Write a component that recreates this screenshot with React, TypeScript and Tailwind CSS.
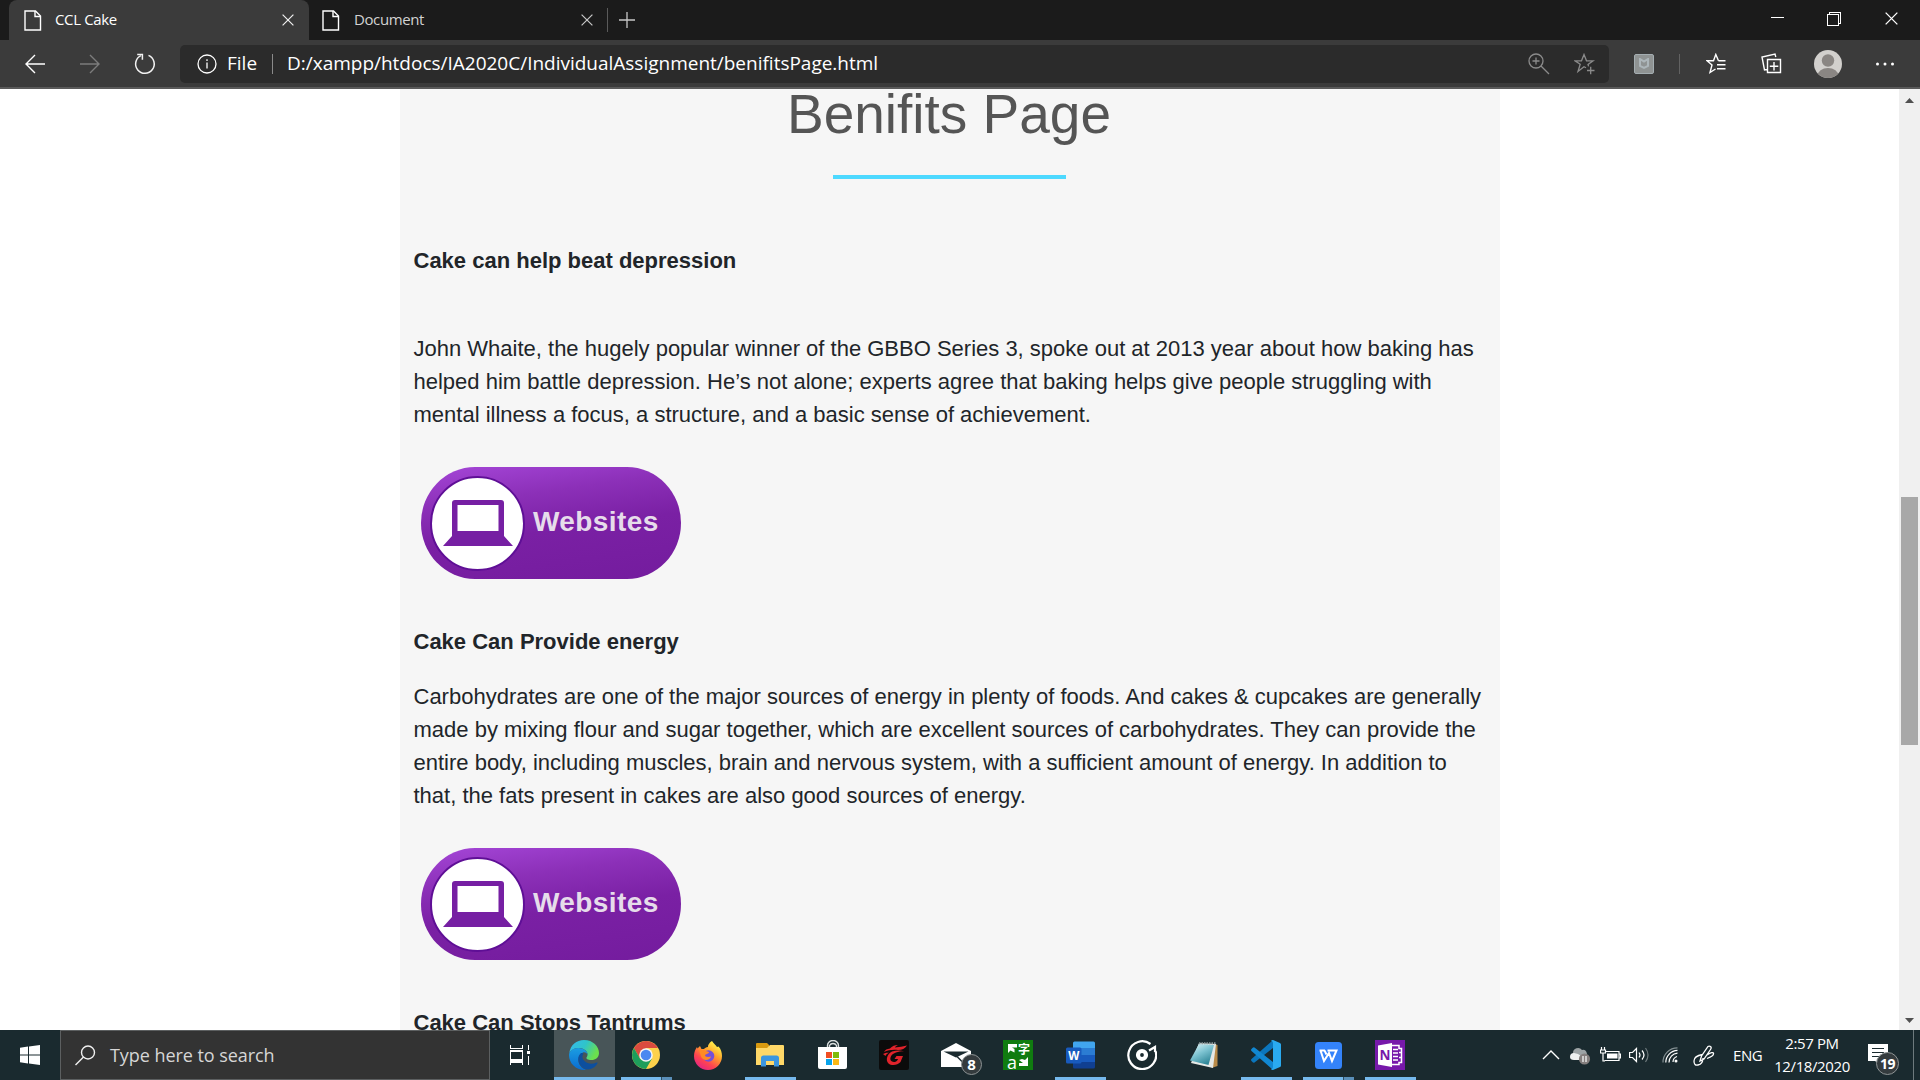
import type { ReactNode } from "react";

const PageIcon = () => (
  <svg width="18" height="21" viewBox="0 0 18 21" fill="none" stroke="#fff" strokeWidth="1.4" className="block shrink-0">
    <path d="M1 1h10.5l5 5v14H1z" />
    <path d="M11 1v5.5h5.5" />
  </svg>
);

const Cross = ({ color, size = 12 }: { color: string; size?: number }) => (
  <svg width={size} height={size} viewBox="0 0 12 12" stroke={color} strokeWidth="1.2" className="block shrink-0">
    <path d="M.6.6l10.8 10.8M11.4.6L.6 11.4" />
  </svg>
);

function TitleBar() {
  return (
    <div className="flex h-10 items-center bg-[#1b1b1b]">
      <div className="ml-[9px] flex h-10 w-[300px] shrink-0 items-center rounded-t-lg bg-[#3b3b3b] pl-[15px]">
        <PageIcon />
        <span className="mb-px ml-[13px] w-[227px] text-[15px] tracking-[-0.35px] text-white">CCL Cake</span>
        <Cross color="#f0f0f0" />
      </div>
      <div className="flex h-10 w-[298px] shrink-0 items-center pl-[13px]">
        <PageIcon />
        <span className="mb-px ml-[14px] w-[227px] text-[15px] tracking-[-0.4px] text-[#d2d2d2]">Document</span>
        <Cross color="#c8c8c8" />
      </div>
      <div className="h-6 w-px bg-[#5a5a5a]" />
      <svg width="16" height="16" viewBox="0 0 16 16" stroke="#c8c8c8" strokeWidth="1.3" className="ml-[11px]">
        <path d="M8 0v16M0 8h16" />
      </svg>
      <div className="ml-auto flex items-center pr-[22px]">
        <div className="mt-[-5px] h-px w-[13px] bg-white" />
        <svg width="14" height="14" viewBox="0 0 14 14" fill="none" stroke="#fff" className="mr-[44px] ml-[43px] mt-[-2px]" shapeRendering="crispEdges">
          <path d="M.5 2.5h11v11H.5zM2.5 2.5v-2h11v11h-2" />
        </svg>
        <div className="mt-[-3px]"><Cross color="#fff" size={13} /></div>
      </div>
    </div>
  );
}

function Toolbar() {
  return (
    <div className="flex h-[49px] items-center border-b-2 border-[#5a5a5a] bg-[#3b3b3b]">
      <svg width="20" height="20" viewBox="0 0 20 20" fill="none" stroke="#fff" strokeWidth="1.4" className="ml-[25px]">
        <path d="M20 10H1M10 1l-9 9 9 9" />
      </svg>
      <svg width="20" height="20" viewBox="0 0 20 20" fill="none" stroke="#7c7c7c" strokeWidth="1.4" className="ml-[35px]">
        <path d="M0 10h19M10 1l9 9-9 9" />
      </svg>
      <svg width="22" height="22" viewBox="0 0 22 22" fill="none" stroke="#f2f2f2" strokeWidth="1.5" className="ml-[34px]">
        <path d="M14.5 2.4a9.3 9.3 0 1 1-7.6.2" />
        <path d="M3.2 1.5h5.2v5.3" />
      </svg>
      <div className="ml-[24px] flex h-[38px] w-[1429px] shrink-0 items-center rounded-[5px] bg-[#2b2b2b] text-white">
        <svg width="20" height="20" viewBox="0 0 20 20" fill="none" stroke="#fff" strokeWidth="1.3" className="ml-[17px] shrink-0">
          <circle cx="10" cy="10" r="9" />
          <path d="M10 8.5v6M10 5.2v1.8" />
        </svg>
        <span className="ml-[10px] w-[45px] text-[19px]">File</span>
        <div className="h-5 w-px bg-[#8a8a8a]" />
        <span className="ml-[14px] whitespace-nowrap text-[19px] tracking-[-0.01px]">D:/xampp/htdocs/IA2020C/IndividualAssignment/benifitsPage.html</span>
        <svg width="22" height="22" viewBox="0 0 22 22" fill="none" stroke="#8b8b8b" strokeWidth="1.3" className="ml-auto">
          <circle cx="8" cy="8" r="7" />
          <path d="M13 13l8 8M8 4.5v7M4.5 8h7" />
        </svg>
        <svg width="22" height="22" viewBox="0 0 22 22" fill="none" stroke="#8b8b8b" strokeWidth="1.3" className="mr-[13px] ml-[24px]">
          <path d="M12 14.8L10 13.7 4 18.5l2.2-7.2L1 7.8h6.5L10 1.500l2.500 6.300H19l-5 3.600.6 2M13 17.500h7.500M16.700 13.800v7.500" />
        </svg>
      </div>
      <div className="ml-[25px] flex size-5 items-center justify-center rounded-[2px] border border-[#a4adb1] bg-[#8f9393]">
        <svg width="12" height="12" viewBox="0 0 12 12" fill="none" stroke="#adb6ba" strokeWidth="2">
          <path d="M2 1v7l4 2 4-2V1L6 3.500z" />
        </svg>
      </div>
      <div className="ml-[25px] h-5 w-px bg-[#626262]" />
      <svg width="21" height="22" viewBox="0 0 21 22" fill="none" stroke="#fff" strokeWidth="1.4" className="ml-[26px]">
        <path d="M12.500 7.800H19.500M12.500 7.800L9.800 1.500 7.500 7.800H1l5 4.200-2 7.500 5.500-3.500M11 11.800h8.500M11 15.800h8.500" />
      </svg>
      <svg width="21" height="21" viewBox="0 0 21 21" fill="none" stroke="#fff" strokeWidth="1.4" className="ml-[34px]">
        <path d="M6.500 6.500h13v13h-13zM13 9v8.500M8.800 13.200h8.500M6 16.500l-2.500.5L1 4l13-3 .8 3" />
      </svg>
      <svg width="28" height="28" viewBox="0 0 28 28" className="ml-[32px]">
        <defs><clipPath id="av"><circle cx="14" cy="14" r="14" /></clipPath></defs>
        <circle cx="14" cy="14" r="14" fill="#d2d0cd" />
        <circle cx="14" cy="10.500" r="6.200" fill="#8a8683" />
        <ellipse cx="14" cy="26" rx="10.500" ry="8" fill="#8a8683" clipPath="url(#av)" />
      </svg>
      <svg width="20" height="4" viewBox="0 0 20 4" fill="#fff" className="ml-[33px]">
        <circle cx="2.500" cy="2" r="1.500" /><circle cx="10" cy="2" r="1.500" /><circle cx="17.500" cy="2" r="1.500" />
      </svg>
    </div>
  );
}

function WebsitesButton() {
  return (
    <div className="ml-[7.500px] flex h-[112px] w-[260px] items-center rounded-[54px/56px] bg-[linear-gradient(172deg,#a546d8_0%,#8c30b8_28%,#7a20a4_55%,#741c9e_100%)] pl-[9px]">
      <div className="flex size-[95px] shrink-0 items-center justify-center rounded-full border-2 border-[#5f0f96] bg-white">
        <svg width="70" height="47" viewBox="0 0 70 47" fill="#761fa3">
          <path fillRule="evenodd" d="M12 0h46q3 0 3 3v33l9 10H0L9 36V3q0-3 3-3zM14.500 5v26h41V5z" />
        </svg>
      </div>
      <span className="mb-[3px] ml-[8px] font-['Liberation_Sans',sans-serif] text-[28px] font-bold tracking-[0.4px] text-[#e6dcea]">Websites</span>
    </div>
  );
}

function Content() {
  return (
    <div className="flex h-[941px] overflow-hidden bg-white">
      <main className="ml-[400px] h-full w-[1100px] shrink-0 overflow-hidden bg-[#f6f6f6] px-[13.5px] font-['Liberation_Sans',Arial,sans-serif] text-[22px] leading-[33px] text-[#212529]">
        <h1 className="mt-[-8px] mr-[2px] text-center text-[55px] leading-[67px] whitespace-nowrap text-[#555]">Benifits Page</h1>
        <div className="mt-[27px] ml-[419.5px] h-1 w-[233px] bg-[#4dd9ff]" />
        <h2 className="mt-[65px] font-bold">Cake can help beat depression</h2>
        <p className="mt-[55px] whitespace-nowrap">
          John Whaite, the hugely popular winner of the GBBO Series 3, spoke out at 2013 year about how baking has<br />
          helped him battle depression. He’s not alone; experts agree that baking helps give people struggling with<br />
          mental illness a focus, a structure, and a basic sense of achievement.
        </p>
        <div className="mt-[36px]"><WebsitesButton /></div>
        <h2 className="mt-[46px] font-bold">Cake Can Provide energy</h2>
        <p className="mt-[22px] whitespace-nowrap">
          Carbohydrates are one of the major sources of energy in plenty of foods. And cakes &amp; cupcakes are generally<br />
          made by mixing flour and sugar together, which are excellent sources of carbohydrates. They can provide the<br />
          entire body, including muscles, brain and nervous system, with a sufficient amount of energy. In addition to<br />
          that, the fats present in cakes are also good sources of energy.
        </p>
        <div className="mt-[36px]"><WebsitesButton /></div>
        <h2 className="mt-[46px] font-bold">Cake Can Stops Tantrums</h2>
      </main>
      <div className="ml-auto flex h-full w-[21px] flex-col items-center bg-[#f0f0f0]">
        <svg width="9" height="5" viewBox="0 0 9 5" fill="#505050" className="mt-[9px]"><path d="M0 5L4.500 0 9 5z" /></svg>
        <div className="mt-[394px] h-[248px] w-[17px] bg-[#a8a8a8]" />
        <svg width="9" height="5" viewBox="0 0 9 5" fill="#505050" className="mt-auto mb-[7px]"><path d="M0 0L4.500 5 9 0z" /></svg>
      </div>
    </div>
  );
}

const EdgeIcon = () => (
  <svg width="30" height="30" viewBox="0 0 30 30">
    <defs>
      <linearGradient id="e1" x1="0" y1="0" x2="1" y2=".4"><stop stopColor="#35b8f0" /><stop offset=".55" stopColor="#2fc4c9" /><stop offset="1" stopColor="#6be04d" /></linearGradient>
      <linearGradient id="e2" x1="0" y1="0" x2="0" y2="1"><stop stopColor="#1b9de2" /><stop offset="1" stopColor="#0a6cd0" /></linearGradient>
    </defs>
    <path d="M.3 13C1.500 5 7.500 0 15 0c9 0 15 6.500 15 13 0 4.500-3.500 7-7.500 7-4 0-5.500-1.300-5-2.500 1-1.500 1.200-2.500 1-4-.8-3.500-5-5.500-9-5.500-4.500 0-7.500 2-9.200 5z" fill="url(#e1)" />
    <path d="M.3 13C2 9.500 5.500 8 9.500 8c5 0 9 3 9 6.500-1-2-3-2.500-4.500-2-5 2-6 9-2.500 13.500 1.500 2 3.500 3.500 6 3.800C8 31 0 24 0 15z" fill="url(#e2)" />
    <path d="M11.500 13.500c-3 3-3 8 0 12 3.500 5 9.500 5 14 1.500 1.500-1.200 2.500-2.500 3-3.700.3-.8-.3-1-1-.7-4 2-9 1.500-12-1.500-2.500-2.500-2.700-5-1-7.600-1-.4-2-.6-3 0z" fill="#0d4f9e" />
  </svg>
);

const ChromeIcon = () => (
  <svg width="28" height="28" viewBox="0 0 28 28">
    <circle cx="14" cy="14" r="14" fill="#fdd14b" />
    <path d="M14 7h12.100A14 14 0 0 0 1.900 7l6 10.500z" fill="#db4b3f" />
    <path d="M1.900 7A14 14 0 0 0 14 28l6-10.500H8z" fill="#1e9d5b" />
    <circle cx="14" cy="14" r="6.800" fill="#f5f5f5" />
    <circle cx="14" cy="14" r="5.300" fill="#4a88f0" />
  </svg>
);

const FirefoxIcon = () => (
  <svg width="28" height="29" viewBox="0 0 28 29">
    <defs>
      <linearGradient id="f1" x1=".85" y1="0" x2=".2" y2="1"><stop offset=".1" stopColor="#fff04a" /><stop offset=".4" stopColor="#ffa02c" /><stop offset=".7" stopColor="#ff4450" /><stop offset="1" stopColor="#e0208c" /></linearGradient>
    </defs>
    <path d="M18 0c2 3 4 4 5 6l1.500-.5C27 8 28 12 28 15a14 14 0 0 1-28 0c0-4 1.500-7 3-9l.5 1.500L6 5l1.500 3H10c1-1 2-2 4-2-.3-2 2-5 4-6z" fill="url(#f1)" />
    <circle cx="14.500" cy="15" r="5.800" fill="#7650d8" />
    <path d="M5 9c3-1 6 0 7 1l3 1c0 2-4 2-4 3.500 1 2 4 1.500 6 1-1 4-8 5-10 0z" fill="#ff8b25" />
  </svg>
);

const FolderIcon = () => (
  <svg width="28" height="24" viewBox="0 0 28 24">
    <path d="M0 1q0-1 1-1h10l2 2v4H0z" fill="#d99a10" />
    <path d="M0 5h11l3-3h13q1 0 1 1v19H0z" fill="#ffd868" />
    <path d="M5 23.500V15q0-2.500 2.500-2.500h13Q23 12.500 23 15v8.500h-5V18h-8v5.500z" fill="#3b96e0" />
  </svg>
);

const StoreIcon = () => (
  <svg width="29" height="30" viewBox="0 0 29 30">
    <path d="M9.500 8V5.500a5.500 5 0 0 1 11 0V8M11.500 8V5.500a4 4 0 0 1 7 0V8" fill="none" stroke="#d9dede" strokeWidth="1.4" />
    <path d="M0 7h29v20q0 2-2 2H2q-2 0-2-2z" fill="#fff" />
    <path d="M8 12h6v6H8z" fill="#f04e23" /><path d="M15 12h6v6h-6z" fill="#80bb0a" />
    <path d="M8 19h6v6H8z" fill="#08a3ea" /><path d="M15 19h6v6h-6z" fill="#fcb813" />
  </svg>
);

const GarenaIcon = () => (
  <svg width="30" height="30" viewBox="0 0 30 30">
    <rect width="30" height="30" rx="2" fill="#0b0b0b" />
    <path d="M11 8.500c2-2.500 5-3.500 8-3.500-2 1-2.500 1.500-3 2.500 4-.5 8-1 12-2-2 3-5 4.500-9 4.500-5-.5-10 0-14 2 1-2 3-3.200 6-3.500z" fill="#e0232b" />
    <path d="M13 11.500c4-1.200 8-1.500 12-.3-6 0-11 1.500-13 5-2 4 1 6.500 4.500 5.500 1.500-.5 2.200-1.500 2.500-2.700h-3.500l2-3H24l-2.500 6c-3 3.500-9 4-12 1.500-3.500-3.500-1-10 3.500-12z" fill="#e0232b" />
    <path d="M4 14c2-1.200 4-1.500 6-1.300-2 .8-3 1.800-3.500 3.300z" fill="#e0232b" />
  </svg>
);

const Badge = ({ n, className }: { n: string; className: string }) => (
  <span className={"absolute flex items-center justify-center rounded-full border border-[#8e9495] bg-[#343b3e] font-bold text-white " + className}>{n}</span>
);

const MailIcon = () => (
  <div className="relative">
    <svg width="30" height="24" viewBox="0 0 30 24" className="block">
      <path d="M0 8L15 0l15 8v16H0z" fill="#fff" />
      <path d="M2.500 8.500h25L15 14.500z" fill="#1a2a2f" />
      <path d="M14 12.500l8 8 1-1-6-6z" fill="#1a2a2f" />
    </svg>
    <Badge n="8" className="top-[11px] left-[20px] size-[21px] text-[15px]" />
  </div>
);

const TranslateIcon = () => (
  <div className="relative grid size-[30px] grid-cols-2 bg-[#107c10] text-white">
    <svg width="15" height="15" viewBox="0 0 15 15" fill="#fff"><path d="M5 4v9l2.500-2.500 4 2V9L9 7.500h5V4z" /></svg>
    <span className="pt-[1px] font-['Noto_Sans_CJK_SC',sans-serif] text-[12px] leading-[15px] font-bold">字</span>
    <span className="pl-[4px] text-[18px] leading-[13px]">a</span>
    <svg width="15" height="15" viewBox="0 0 15 15" fill="#fff"><path d="M10 1v9H1V7h4L1 4l3-1 3 1z" /></svg>
  </div>
);

const WordIcon = () => (
  <svg width="29" height="28" viewBox="0 0 29 28">
    <path d="M7 2q0-1.500 1.500-1.500h19Q29 .5 29 2v5H7z" fill="#41a5ee" />
    <path d="M7 7h22v7H7z" fill="#2b7cd3" /><path d="M7 14h22v7H7z" fill="#185abd" />
    <path d="M7 21h22v5q0 1.500-1.500 1.500h-19Q7 27.500 7 26z" fill="#103f91" />
    <rect y="6.500" width="15.500" height="16" rx="1.500" fill="#185abd" />
    <text x="7.800" y="18.500" textAnchor="middle" fontFamily="Open Sans, sans-serif" fontWeight="700" fontSize="11.500" fill="#fff">W</text>
  </svg>
);

const GrooveIcon = () => (
  <svg width="30" height="30" viewBox="0 0 30 30" fill="none" stroke="#fff">
    <path d="M23.500 4A13.900 13.900 0 1 0 28.500 11" strokeWidth="2.200" />
    <circle cx="15" cy="15" r="4" strokeWidth="4.200" />
    <path d="M22 10.500l6-3.500v5" strokeWidth="2.200" />
  </svg>
);

const NotepadIcon = () => (
  <svg width="28" height="28" viewBox="0 0 28 28">
    <defs><linearGradient id="np" x1="0" y1="0" x2=".6" y2="1"><stop stopColor="#e5f6f9" /><stop offset=".5" stopColor="#7ec4d2" /><stop offset="1" stopColor="#2f8698" /></linearGradient></defs>
    <path d="M25 3l2.500 1v21l-6 2z" fill="#b88a48" />
    <path d="M9 2l17 1-3 24L1 22z" fill="#e4e8e6" />
    <path d="M9 3l15 1-5.500 20L0 19.500z" fill="url(#np)" />
    <path d="M9 2.200h17" stroke="#8d9a9c" strokeWidth="2" strokeDasharray="1.500 1" />
  </svg>
);

const VSCodeIcon = () => (
  <svg width="30" height="30" viewBox="0 0 30 30">
    <path d="M22 0v8L3.500 22.500q-1 .5-1.800-.2L.5 21q-1-1 0-2z" fill="#0b76bd" />
    <path d="M22 30v-8L3.500 7.500q-1-.5-1.800.2L.5 9q-1 1 0 2z" fill="#1187d2" />
    <path d="M22 0l7 3q1 .5 1 1.500v21q0 1-1 1.500l-7 3q-1.500 0-2-1 2 0 2-2V3q0-2-2-2 .5-1 2-1z" fill="#2aaaf0" />
  </svg>
);

const WpsIcon = () => (
  <svg width="27" height="27" viewBox="0 0 27 27" fill="none">
    <rect width="27" height="27" rx="3.500" fill="#3483fa" />
    <path d="M4.500 8.500h5.500M5.500 8.500l3.500 10.500 5-8 3 8 4.500-10.500h-9M9.500 8.500l2 4" stroke="#fff" strokeWidth="2" />
  </svg>
);

const OneNoteIcon = () => (
  <svg width="30" height="30" viewBox="0 0 30 30">
    <path d="M0 0h30v30H0z" fill="#7719aa" />
    <path d="M17 5.500h7v3h2.500v14H24v2h-7" fill="none" stroke="#fff" strokeWidth="1.5" />
    <path d="M18 9.500h5M18 13h5M18 16.500h5M18 20h5M24 12.500h3M24 17.500h3" stroke="#fff" strokeWidth="1.3" />
    <path d="M3 5.500L17 3v24L3 24.500z" fill="#fff" />
    <text x="10" y="19.800" textAnchor="middle" fontFamily="Open Sans, sans-serif" fontWeight="700" fontSize="13.500" fill="#7719aa">N</text>
  </svg>
);

type AppEntry = { icon: ReactNode; open?: "one" | "many" | "active" };

const apps: AppEntry[] = [
  { icon: <EdgeIcon />, open: "active" },
  { icon: <ChromeIcon />, open: "many" },
  { icon: <FirefoxIcon /> },
  { icon: <FolderIcon />, open: "one" },
  { icon: <StoreIcon /> },
  { icon: <GarenaIcon /> },
  { icon: <MailIcon /> },
  { icon: <TranslateIcon /> },
  { icon: <WordIcon />, open: "one" },
  { icon: <GrooveIcon /> },
  { icon: <NotepadIcon /> },
  { icon: <VSCodeIcon />, open: "one" },
  { icon: <WpsIcon />, open: "many" },
  { icon: <OneNoteIcon />, open: "one" },
];

function AppSlot({ icon, open }: AppEntry) {
  return (
    <div className={"mr-px flex h-[50px] w-[61px] shrink-0 flex-col items-center " + (open === "active" ? "bg-[#485558]" : "")}>
      <div className="mr-px flex h-[47px] items-center pt-[3px]">{icon}</div>
      {open === "active" && <div className="h-[3px] w-full bg-[#76b9ed]" />}
      {open === "one" && <div className="h-[3px] w-[51px] bg-[#76b9ed]" />}
      {open === "many" && (
        <div className="flex h-[3px] w-[51px]">
          <div className="w-10 bg-[#76b9ed]" />
          <div className="w-px bg-[#2f4e62]" />
          <div className="w-[10px] bg-[#5a8fb9]" />
        </div>
      )}
    </div>
  );
}

function Tray() {
  return (
    <div className="ml-auto flex h-full items-center text-white">
      <svg width="18" height="10" viewBox="0 0 18 10" fill="none" stroke="#fff" strokeWidth="1.4"><path d="M1 9l8-8 8 8" /></svg>
      <svg width="21" height="18" viewBox="0 0 21 18" className="mt-[2px] ml-[10px]">
        <path d="M3 6a5 5 0 0 1 9-3q4-1 5 4l-9 4-5 1z" fill="#9da3a5" />
        <path d="M0 10q0-4 4-4l4 1 8 5v1H4q-4 0-4-3z" fill="#eef0f0" />
        <circle cx="14.500" cy="12" r="5.600" fill="#857f7e" />
        <path d="M13 9v6M16 9v6" stroke="#fff" strokeWidth="1.2" />
      </svg>
      <svg width="21" height="16" viewBox="0 0 21 16" fill="none" stroke="#fff" strokeWidth="1.2" className="ml-[9px]">
        <path d="M1.500 0v3M4.500 0v3M.5 3h5v3h-5zM3 6v8h2M6 4.500h13v9H4.500M19 7h1.500v4H19" />
        <path d="M7 6.500h10.500v5H7z" fill="#fff" stroke="none" />
      </svg>
      <svg width="21" height="18" viewBox="0 0 21 18" fill="none" stroke="#fff" strokeWidth="1.2" className="ml-[8px]">
        <path d="M.6 6.500h2.900L7.500 2.500v13L3.500 11.500H.6zM10 6.500q2 2.500 0 5M13 4.500q4 4.500 0 9" />
        <path d="M16.500 2q5 7 0 14" stroke="#6e797c" />
      </svg>
      <svg width="17" height="17" viewBox="0 0 17 17" fill="none" stroke="#fff" strokeWidth="1.2" className="ml-[12px]">
        <path d="M11 15A6 6 0 0 1 15 9.500M7 15.500A9 9 0 0 1 15.500 6.200M3.800 15.500A12 12 0 0 1 15.500 3.400" />
        <path d="M1 15.500A14.500 14.500 0 0 1 15.500.8" stroke="#849093" />
        <circle cx="14" cy="14" r="1.500" fill="#fff" stroke="none" />
      </svg>
      <svg width="22" height="21" viewBox="0 0 22 21" fill="none" stroke="#fff" strokeWidth="1.3" className="ml-[14px]">
        <path d="M7 16L8.500 11 15 1.500q1.500-1 3 .5.500 1-.5 2.500L11 14zM9.500 9.500Q1 11 1 16t4 4q5-1 5-7M14 10q6-4 6.500-1.500T14 13.500" />
      </svg>
      <span className="ml-[18px] w-[41px] text-[15px] tracking-[-0.4px]">ENG</span>
      <div className="flex w-[76px] flex-col items-center text-[15px] leading-[23px] tracking-[-0.4px] whitespace-nowrap">
        <span>2:57 PM</span>
        <span>12/18/2020</span>
      </div>
      <div className="relative mt-[-4px] mr-[25px] ml-[18px]">
        <svg width="20" height="19" viewBox="0 0 20 19" className="block">
          <path d="M0 0h20v17H10v2l-3-2H0z" fill="#fff" />
          <path d="M4 4.500h12M4 8.500h12M4 12.500h8" stroke="#1a2a2f" strokeWidth="1.2" />
        </svg>
        <Badge n="19" className="top-[8px] left-[8px] size-[23px] text-[14px] tracking-[-0.5px]" />
      </div>
      <div className="mr-[6px] h-full w-px bg-[#6e7a7d]" />
    </div>
  );
}

function Taskbar() {
  return (
    <div className="flex h-[50px] items-center bg-[#1a2a2f]">
      <div className="flex w-[60px] shrink-0 items-center justify-center">
        <svg width="20" height="20" viewBox="0 0 20 20" fill="#fff">
          <path d="M0 2.800l8-1.200v7.900H0zM9 1.500L20 0v9.500H9zM0 10.500h8v7.900l-8-1.200zM9 10.500h11V20L9 18.500z" />
        </svg>
      </div>
      <div className="flex h-[50px] w-[430px] shrink-0 items-center border border-[#5c5f60] bg-[#333] pl-[14px]">
        <svg width="21" height="21" viewBox="0 0 21 21" fill="none" stroke="#f0f0f0" strokeWidth="1.4">
          <circle cx="13" cy="7.500" r="6.500" /><path d="M8.500 12L.5 20" />
        </svg>
        <span className="ml-[14px] text-[18px] tracking-[-0.06px] text-[#d6d6d6]">Type here to search</span>
      </div>
      <div className="flex w-[64px] shrink-0 items-center pl-[20px]">
        <svg width="21" height="20" viewBox="0 0 21 20" fill="none" stroke="#fff" strokeWidth="1.3" shapeRendering="crispEdges">
          <path d="M.5 0v3.500h12V0M.5 6h12v9H.5zM.5 20v-3h12v3M18.500 0v5M18.500 11v9" />
          <path d="M17 6h3v3h-3z" fill="#fff" stroke="none" />
        </svg>
      </div>
      {apps.map((a, i) => <AppSlot key={i} {...a} />)}
      <Tray />
    </div>
  );
}

export default function App() {
  return (
    <div className="flex h-[1080px] w-[1920px] flex-col overflow-hidden font-['Open_Sans','Noto_Sans',sans-serif]">
      <TitleBar />
      <Toolbar />
      <Content />
      <Taskbar />
    </div>
  );
}
